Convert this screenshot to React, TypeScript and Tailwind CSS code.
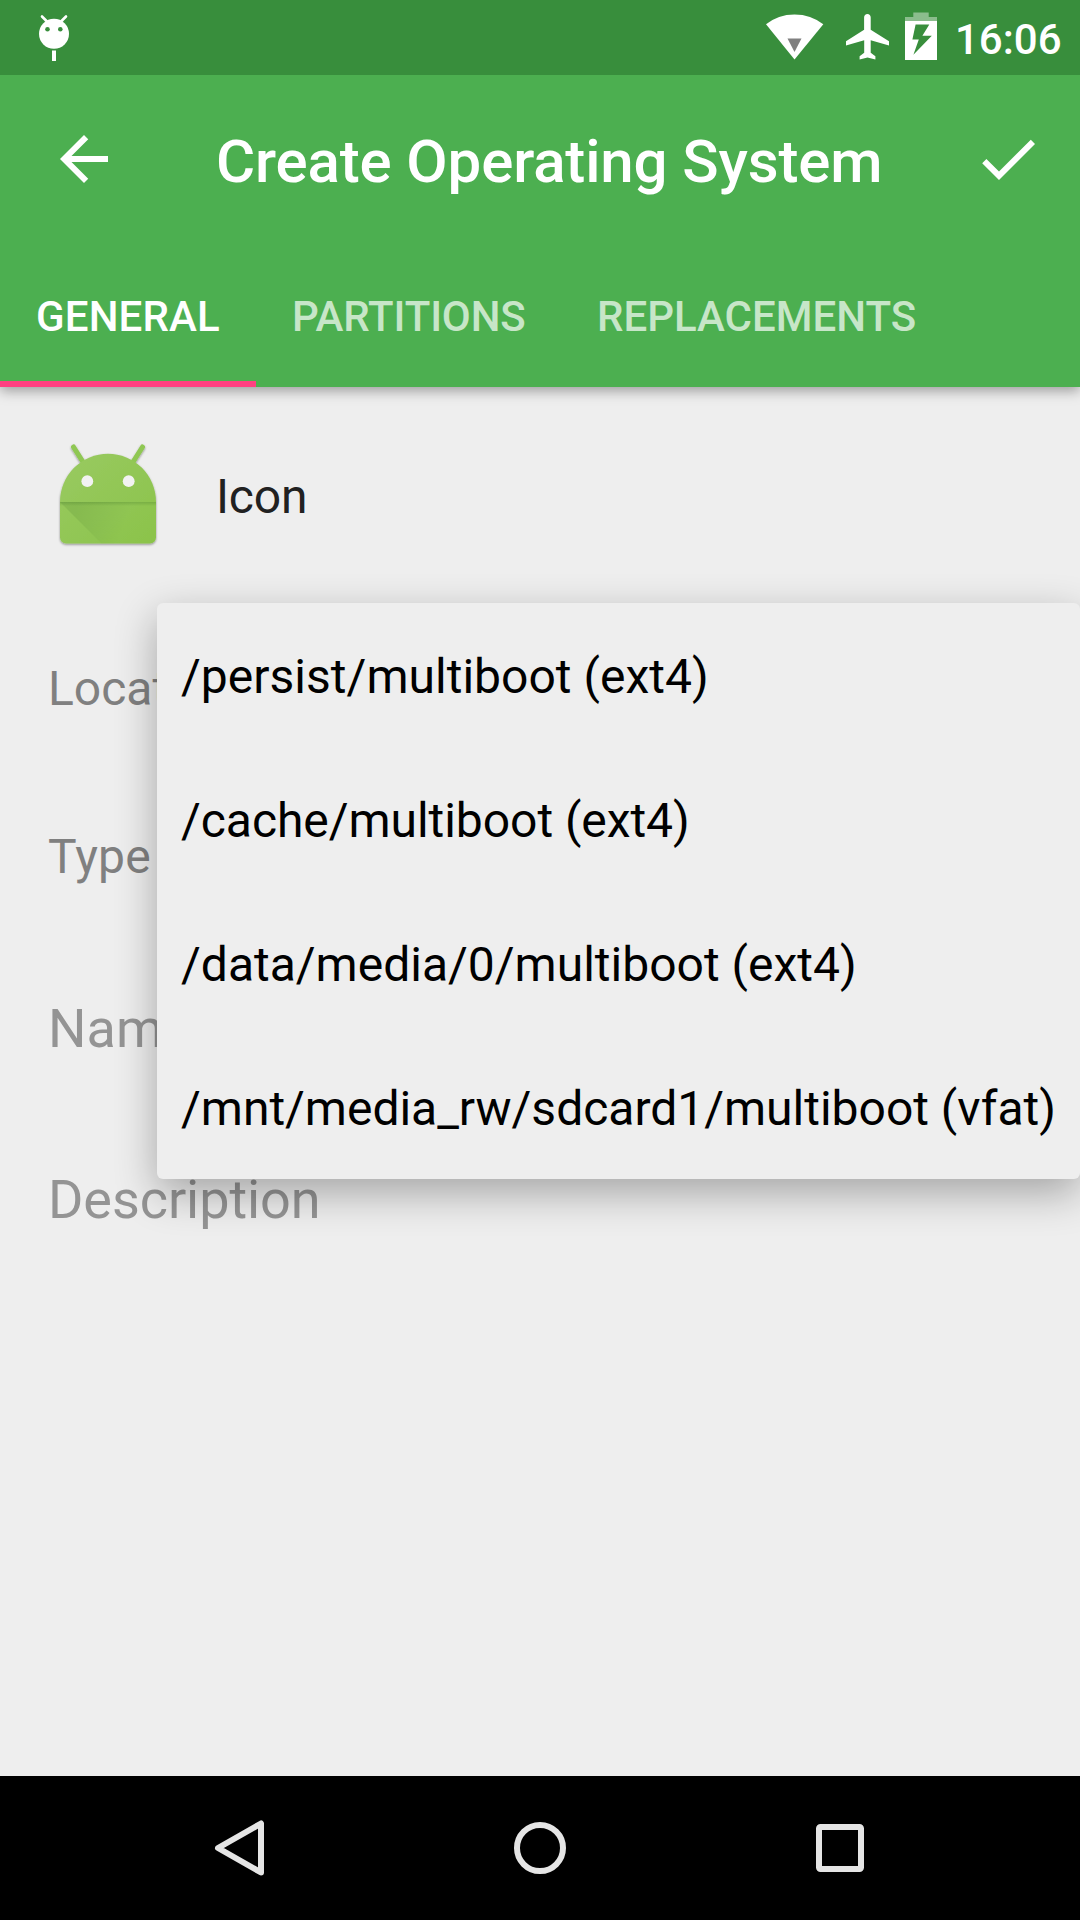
import React from "react";

const tabs = [
  { label: "GENERAL", active: true, style: "w-[256px] tracking-[0.15px] text-white" },
  { label: "PARTITIONS", active: false, style: "w-[305px] tracking-[-0.15px] text-white/70" },
  { label: "REPLACEMENTS", active: false, style: "text-white/70" },
];

const locations = [
  { path: "/persist/multiboot (ext4)", style: "tracking-[0.02px]" },
  { path: "/cache/multiboot (ext4)", style: "tracking-[-0.05px]" },
  { path: "/data/media/0/multiboot (ext4)", style: "tracking-normal" },
  { path: "/mnt/media_rw/sdcard1/multiboot (vfat)", style: "tracking-[-0.01px]" },
];

function StatusBar() {
  return (
    <div className="relative z-20 flex h-[75px] items-start bg-[#388e3c]">
      <svg className="ml-9 h-[75px] w-9" viewBox="36 0 36 75" fill="#fff">
        <path d="M42 16.5l5 5M66 16.5l-5 5" stroke="#fff" strokeWidth="2.6" strokeLinecap="round" />
        <circle cx="54" cy="33.8" r="15" />
        <circle cx="47.5" cy="29.3" r="2.3" fill="#388e3c" />
        <circle cx="60.3" cy="29.3" r="2.3" fill="#388e3c" />
        <rect x="52" y="50.5" width="4" height="10.5" />
      </svg>
      <svg className="ml-[688px] h-[75px] w-[180px] shrink-0" viewBox="760 0 180 75" fill="#fff">
        <path d="M766 24.3Q778 14.4 794.5 14.4T823.3 24.3L794.5 59.4z" />
        <path d="M787.5 38.5h14l-7 13.5z" fill="#808080" />
        <path d="M889 45.4v-4.2l-18.3-11.4V17.4c0-1.9-1.4-3.4-3.3-3.4s-3.3 1.5-3.3 3.4v12.4L846 41.2v4.2l18.2-5.2v12.6l-4.6 3.4v3.4l7.9-2 7.9 2v-3.4l-4.7-3.4V40.2z" />
        <path d="M905 21v-4h8.3v-4.6h15.4V17h8.3v4z" fillOpacity=".42" />
        <path fillRule="evenodd" d="M905 21h32v39h-32zM915.6 24.4L912.4 39.4h6.4L913.4 54.7 931.8 35.8h-9.4L929.3 24.4z" />
      </svg>
      <span className="ml-[15px] whitespace-nowrap pt-[2px] text-[42px] font-medium leading-[76px] text-white">16:06</span>
    </div>
  );
}

function AppBar() {
  return (
    <header className="relative z-10 bg-[#4caf50] text-white shadow-[0_4px_12px_rgba(0,0,0,0.34)]">
      <div className="flex h-[168px] items-center pl-12 pr-9">
        <svg className="h-[72px] w-[72px]" viewBox="0 0 24 24" fill="currentColor">
          <path d="M20 11H7.83l5.59-5.59L12 4l-8 8 8 8 1.41-1.41L7.83 13H20v-2z" />
        </svg>
        <h1 className="ml-24 grow whitespace-nowrap pt-[5px] text-[60px] font-medium leading-[72px] tracking-[-0.14px]">
          Create Operating System
        </h1>
        <svg className="h-[72px] w-[72px]" viewBox="0 0 24 24" fill="currentColor">
          <path d="M9 16.2L4.8 12l-1.4 1.4L9 19 21 7l-1.4-1.4L9 16.2z" />
        </svg>
      </div>
      <nav className="flex h-36">
        {tabs.map((t) => (
          <div key={t.label} className={"flex flex-col text-[42px] font-medium " + t.style}>
            <span className="px-9 pt-[3px] leading-[141px]">{t.label}</span>
            {t.active && <div className="-mt-1.5 h-1.5 bg-[#ff4081]" />}
          </div>
        ))}
      </nav>
    </header>
  );
}

function AndroidIcon() {
  return (
    <svg className="h-[113px] w-[108px]" viewBox="0 0 108 113">
      <defs>
        <linearGradient id="head" x1="0" y1="0" x2="1" y2="1">
          <stop offset="0" stopColor="#99ca61" />
          <stop offset="1" stopColor="#8bc34a" />
        </linearGradient>
        <linearGradient id="fold" gradientUnits="userSpaceOnUse" x1="20" y1="75" x2="68" y2="92">
          <stop offset="0" stopColor="#33691e" stopOpacity=".14" />
          <stop offset="1" stopColor="#33691e" stopOpacity="0" />
        </linearGradient>
        <linearGradient id="seam" x1="0" y1="0" x2="0" y2="1">
          <stop offset="0" stopColor="#33691e" stopOpacity=".24" />
          <stop offset="1" stopColor="#33691e" stopOpacity="0" />
        </linearGradient>
        <filter id="drop" x="-10%" y="-10%" width="120%" height="125%">
          <feDropShadow dx="0" dy="1.2" stdDeviation="1.1" floodColor="#000" floodOpacity=".4" />
        </filter>
      </defs>
      <g filter="url(#drop)">
        <path d="M19.5 7L29 22M88.5 7L79 22" stroke="#8fc753" strokeWidth="5" strokeLinecap="round" />
        <path d="M6 62a48 48.3 0 0 1 96 0v35.5a6 6 0 0 1-6 6H12a6 6 0 0 1-6-6z" fill="url(#head)" />
      </g>
      <path d="M6 62h96L80 103.5H47.5z" fill="url(#fold)" />
      <rect x="6" y="62" width="96" height="4" fill="url(#seam)" />
      <circle cx="33.3" cy="41.2" r="5.9" fill="#f2f2f2" />
      <circle cx="74.7" cy="41.2" r="5.9" fill="#f2f2f2" />
    </svg>
  );
}

function LocationMenu() {
  return (
    <ul className="absolute right-0 top-[216px] w-[923px] rounded-md bg-[#eeeeee] shadow-[0_14px_42px_rgba(0,0,0,0.31)]">
      {locations.map((l) => (
        <li
          key={l.path}
          className={"h-36 whitespace-nowrap px-6 pt-[3px] text-[48px] leading-[141px] text-black " + l.style}
        >
          {l.path}
        </li>
      ))}
    </ul>
  );
}

export default function App() {
  return (
    <div className="flex h-[1920px] w-[1080px] flex-col overflow-hidden bg-[#eeeeee] font-['Roboto',sans-serif]">
      <StatusBar />
      <AppBar />
      <main className="relative grow">
        <div className="flex h-[219px] items-center pl-[54px]">
          <AndroidIcon />
          <span className="ml-[54px] text-[48px] leading-[57px] tracking-[-0.2px] text-[#212121]">Icon</span>
        </div>
        <div className="flex h-[165px] items-center pl-12 text-[48px] leading-[57px] text-[#808080]">Location</div>
        <div className="flex h-[171px] items-center pl-12 text-[48px] leading-[57px] tracking-[0.2px] text-[#808080]">Type</div>
        <div className="flex h-[173px] items-center pl-12 text-[54px] leading-[63px] text-[#949494]">Name</div>
        <div className="flex h-[169px] items-center pl-12 text-[54px] leading-[63px] tracking-[-0.08px] text-[#949494]">Description</div>
        <LocationMenu />
      </main>
      <footer className="flex h-36 items-center justify-center gap-[228px] bg-black">
        <svg className="h-[72px] w-[72px]" viewBox="0 0 72 72" fill="none" stroke="#e5e5e5" strokeWidth="6" strokeLinejoin="round">
          <path d="M57 11.5V60.5L14 36z" />
        </svg>
        <svg className="h-[72px] w-[72px]" viewBox="0 0 72 72" fill="none" stroke="#e5e5e5" strokeWidth="6">
          <circle cx="36" cy="36" r="23" />
        </svg>
        <svg className="h-[72px] w-[72px]" viewBox="0 0 72 72" fill="none" stroke="#e5e5e5" strokeWidth="6">
          <rect x="15" y="15" width="42" height="42" rx="1.5" />
        </svg>
      </footer>
    </div>
  );
}
